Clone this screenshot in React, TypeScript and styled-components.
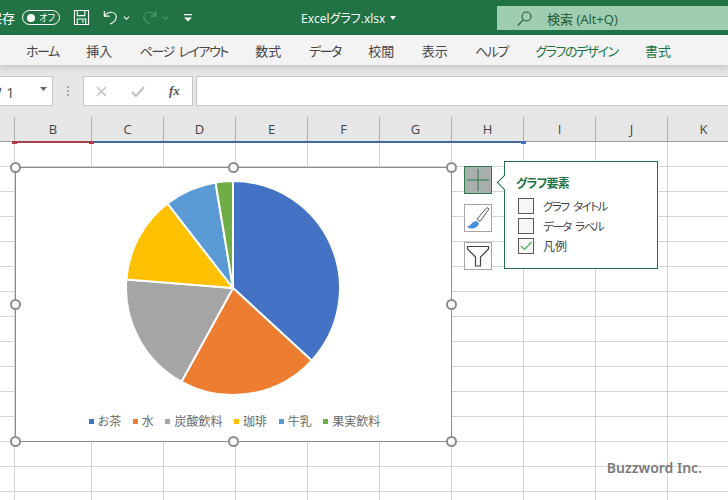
import styled, { createGlobalStyle } from "styled-components"

const GlobalStyle = createGlobalStyle`
    html, body {
        margin: 0;
        padding: 0;
        background: #fff;
    }
    body {
        font-family: "Open Sans", "Noto Sans CJK JP", sans-serif;
    }
    * {
        box-sizing: border-box;
    }
`

const Page = styled.div`
    width: 728px;
    height: 500px;
    overflow: hidden;
    display: flex;
    flex-direction: column;
    position: relative;
    font-feature-settings: "palt";
`

const TitleBar = styled.div`
    height: 35px;
    flex: none;
    background: #217346;
    color: #fff;
    display: flex;
    align-items: center;
`

const SaveLabel = styled.span`
    font-size: 13px;
    margin-left: -11px;
    width: 33px;
    white-space: nowrap;
`

const Toggle = styled.div`
    width: 38px;
    height: 15px;
    border: 1px solid #fff;
    border-radius: 8px;
    display: flex;
    align-items: center;
    justify-content: space-between;
    padding: 0 4px 0 4px;
    font-size: 9px;
    line-height: 1;
`

const ToggleKnob = styled.span`
    width: 8px;
    height: 8px;
    border-radius: 50%;
    background: #fff;
`

const QuickIcon = styled.svg<{ $left: number }>`
    flex: none;
    margin-left: ${({ $left }) => $left}px;
`

const FileName = styled.div`
    margin-left: 109px;
    width: 196px;
    font-size: 12px;
    display: flex;
    align-items: center;
    gap: 5px;
`

const Search = styled.div`
    width: 231px;
    height: 24px;
    margin-top: 1px;
    background: #9fcdb0;
    display: flex;
    align-items: center;
    padding-left: 20px;
    gap: 15px;
    color: #1d5a37;
    font-size: 13px;
`

const TabBar = styled.div`
    height: 30px;
    flex: none;
    background: #f3f3f3;
    display: flex;
    align-items: center;
    padding-left: 26px;
    gap: 27.5px;
    box-shadow: 0 3px 6px rgba(0, 0, 0, 0.14);
    position: relative;
`

const Tab = styled.span<{ $accent?: boolean; $kana?: boolean }>`
    font-size: 13px;
    white-space: nowrap;
    word-spacing: 3px;
    letter-spacing: ${({ $kana }) => ($kana ? "-1.5px" : "0")};
    color: ${({ $accent }) => ($accent ? "#217346" : "#444")};
`

const FormulaBar = styled.div`
    height: 52px;
    flex: none;
    background: #e6e6e6;
    display: flex;
    align-items: flex-start;
    padding-top: 11px;
`

const NameBox = styled.div`
    width: 113px;
    height: 30px;
    margin-left: -60px;
    flex: none;
    background: #fff;
    border: 1px solid #c6c6c6;
    display: flex;
    align-items: center;
    justify-content: space-between;
    padding: 0 5px 0 22px;
    font-size: 15px;
    color: #555;
    white-space: nowrap;
`

const NameCaret = styled.svg`
    margin-bottom: 5px;
`

const Grip = styled.div`
    width: 30px;
    height: 30px;
    flex: none;
    display: flex;
    flex-direction: column;
    align-items: center;
    justify-content: center;
    gap: 2px;

    span {
        width: 2px;
        height: 2px;
        background: #a6a6a6;
    }
`

const FormulaButtons = styled.div`
    width: 110px;
    height: 30px;
    flex: none;
    background: #fff;
    border: 1px solid #c6c6c6;
    display: flex;
    align-items: center;
    padding-left: 12px;
    gap: 24px;
`

const FxLabel = styled.span`
    font-family: "Liberation Serif", serif;
    font-style: italic;
    font-weight: 700;
    font-size: 13px;
    color: #555;
`

const FormulaInput = styled.div`
    flex: 1;
    height: 30px;
    margin-left: 3px;
    background: #fff;
    border: 1px solid #c6c6c6;
    border-right: none;
`

const ColumnHeaders = styled.div`
    height: 25px;
    flex: none;
    background: #e6e6e6;
    display: grid;
    grid-template-columns: 15px 77px repeat(10, 72px);
    border-bottom: 1px solid #9a9a9a;
    position: relative;
`

const ColumnHead = styled.div`
    border-right: 1px solid #b0b0b0;
    display: flex;
    align-items: center;
    justify-content: center;
    font-size: 13px;
    color: #444;
`

const RangeLine = styled.div<{ $from: number; $to: number; $color: string }>`
    position: absolute;
    z-index: 1;
    left: ${({ $from }) => $from}px;
    width: ${({ $to, $from }) => $to - $from}px;
    bottom: -2px;
    height: 2px;
    background: ${({ $color }) => $color};
`

const RangeMark = styled.div<{ $at: number; $color: string }>`
    position: absolute;
    z-index: 1;
    left: ${({ $at }) => $at}px;
    bottom: -3px;
    width: 5px;
    height: 3px;
    background: ${({ $color }) => $color};
`

const Sheet = styled.div`
    flex: 1;
    position: relative;
    overflow: hidden;
`

const CellGrid = styled.div`
    display: grid;
    grid-template-columns: 15px 77px repeat(10, 72px);
    grid-template-rows: repeat(15, 25px);
`

const Cell = styled.div`
    border-right: 1px solid #d4d4d4;
    border-bottom: 1px solid #d4d4d4;
`

const ChartFrame = styled.div`
    position: absolute;
    left: 15px;
    top: 25px;
    width: 437px;
    height: 275px;
    background: #fff;
    border: 1px solid #8c8c8c;
    display: flex;
    flex-direction: column;
    align-items: center;
    padding-top: 12px;
`

const PieBox = styled.svg`
    flex: none;
    margin-right: 1px;
`

const Legend = styled.div`
    display: flex;
    align-items: center;
    gap: 11.6px;
    margin: 16px 0 0 2px;
    font-size: 12px;
    color: #6a6a6a;
`

const LegendItem = styled.div`
    display: flex;
    align-items: center;
    gap: 4px;
`

const LegendDot = styled.span<{ $color: string }>`
    width: 5px;
    height: 5px;
    background: ${({ $color }) => $color};
`

const Handle = styled.span<{ $x: number; $y: number }>`
    position: absolute;
    left: calc(${({ $x }) => $x}% + ${({ $x }) => $x / 100}px);
    top: calc(${({ $y }) => $y}% + ${({ $y }) => $y / 100}px);
    width: 11px;
    height: 11px;
    margin: -6px 0 0 -6px;
    border-radius: 50%;
    background: #fff;
    border: 2px solid #8c8c8c;
`

const ChartTools = styled.div`
    position: absolute;
    left: 464px;
    top: 19px;
    display: flex;
    gap: 12px;
    align-items: flex-start;
`

const ToolColumn = styled.div`
    display: flex;
    flex-direction: column;
    gap: 10px;
    padding-top: 5px;
`

const ToolButton = styled.div<{ $active?: boolean }>`
    width: 28px;
    height: 28px;
    display: flex;
    align-items: center;
    justify-content: center;
    background: ${({ $active }) => ($active ? "#a9aeab" : "#fff")};
    border: 1px solid ${({ $active }) => ($active ? "#2b7a50" : "#a6a6a6")};
`

const Popup = styled.div`
    width: 154px;
    height: 108px;
    position: relative;
    background: #fff;
    border: 1px solid #217346;
    padding: 14px 0 0 11px;

    &::before {
        content: "";
        position: absolute;
        left: -6px;
        top: 15px;
        width: 10px;
        height: 10px;
        background: #fff;
        border-left: 1px solid #217346;
        border-bottom: 1px solid #217346;
        transform: rotate(45deg);
    }
`

const PopupTitle = styled.div`
    font-size: 12px;
    line-height: 16px;
    font-weight: 700;
    letter-spacing: -0.8px;
    color: #217346;
    margin-bottom: 6px;
`

const OptionRow = styled.div`
    display: flex;
    align-items: center;
    gap: 9px;
    height: 16px;
    margin: 0 0 4px 2px;
    color: #444;
    white-space: nowrap;
`

const OptionLabel = styled.span<{ $kana?: boolean }>`
    font-size: ${({ $kana }) => ($kana ? "11.5px" : "12px")};
    word-spacing: 3px;
    letter-spacing: ${({ $kana }) => ($kana ? "-1.5px" : "0")};
`

const CheckBox = styled.span`
    width: 16px;
    height: 16px;
    flex: none;
    display: flex;
    align-items: center;
    justify-content: center;
    background: #f6f6f6;
    border: 1px solid #5a5a5a;
`

const Watermark = styled.div`
    position: absolute;
    right: 26px;
    bottom: 23px;
    font-size: 14px;
    font-weight: 600;
    color: #7a7a7a;
    font-family: "Noto Sans", sans-serif;
`

type Slice = { name: string; color: string; end: number }

const slices: Slice[] = [
    { name: "お茶", color: "#4472c4", end: 132.7 },
    { name: "水", color: "#ed7d31", end: 208.8 },
    { name: "炭酸飲料", color: "#a5a5a5", end: 274.6 },
    { name: "珈琲", color: "#ffc000", end: 322.2 },
    { name: "牛乳", color: "#5b9bd5", end: 350.6 },
    { name: "果実飲料", color: "#70ad47", end: 360 },
]

const tabs = [
    { label: "ホーム", kana: true },
    { label: "挿入" },
    { label: "ページ レイアウト", kana: true },
    { label: "数式" },
    { label: "データ", kana: true },
    { label: "校閲" },
    { label: "表示" },
    { label: "ヘルプ", kana: true },
    { label: "グラフのデザイン", kana: true, accent: true },
    { label: "書式", accent: true },
]

const columns = ["", "B", "C", "D", "E", "F", "G", "H", "I", "J", "K", ""]

const point = (deg: number, r: number, c: number) => {
    const rad = (deg * Math.PI) / 180
    return `${(c + r * Math.sin(rad)).toFixed(2)} ${(c - r * Math.cos(rad)).toFixed(2)}`
}

const PieChart = () => {
    const c = 108
    const r = 107
    return (
        <PieBox width={216} height={216} viewBox="0 0 216 216">
            {slices.map((s, i) => {
                const start = i === 0 ? 0 : slices[i - 1].end
                const large = s.end - start > 180 ? 1 : 0
                return (
                    <path
                        key={s.name}
                        d={`M${c} ${c}L${point(start, r, c)}A${r} ${r} 0 ${large} 1 ${point(s.end, r, c)}Z`}
                        fill={s.color}
                        stroke="#fff"
                        strokeWidth={2}
                    />
                )
            })}
        </PieBox>
    )
}

const handles = [
    [0, 0], [50, 0], [100, 0],
    [0, 50], [100, 50],
    [0, 100], [50, 100], [100, 100],
]

export default function App() {
    return (
        <Page>
            <GlobalStyle />
            <TitleBar>
                <SaveLabel>保存</SaveLabel>
                <Toggle>
                    <ToggleKnob />
                    <span>オフ</span>
                </Toggle>
                <QuickIcon $left={13} width="17" height="17" viewBox="0 0 18 18" fill="none" stroke="#fff" strokeWidth="1.1">
                    <path d="M1.5 1.5h15v15h-15z" />
                    <path d="M4.5 1.5v5.5h8v-5.5M4.5 16.5v-6h9v6M10.5 11.5v3" />
                </QuickIcon>
                <QuickIcon $left={13} width="15" height="17" viewBox="0 0 17 18" fill="none" stroke="#fff" strokeWidth="1.3">
                    <path d="M1.5 1.5v6h6" />
                    <path d="M1.5 7.5c2-2.8 4.500-4.500 7.500-4.500 3.500 0 6 2.500 6 5.500 0 4-3.500 6.500-7 8" />
                </QuickIcon>
                <QuickIcon $left={5} width="7" height="6" viewBox="0 0 8 6" fill="none" stroke="#fff" strokeWidth="1.2">
                    <path d="M1 1.500l3 3 3-3" />
                </QuickIcon>
                <QuickIcon $left={12} width="15" height="17" viewBox="0 0 17 18" fill="none" stroke="#4f9a72" strokeWidth="1.3">
                    <path d="M15.500 1.500v6h-6" />
                    <path d="M15.500 7.500c-2-2.800-4.500-4.500-7.500-4.500-3.500 0-6 2.500-6 5.500 0 4 3.500 6.500 7 8" />
                </QuickIcon>
                <QuickIcon $left={5} width="7" height="6" viewBox="0 0 8 6" fill="none" stroke="#4f9a72" strokeWidth="1.2">
                    <path d="M1 1.500l3 3 3-3" />
                </QuickIcon>
                <QuickIcon $left={15} width="8" height="8" viewBox="0 0 8 8" fill="#fff">
                    <path d="M0 0h8v1.200h-8zM0 3.500h8l-4 4z" />
                </QuickIcon>
                <FileName>
                    Excelグラフ.xlsx
                    <svg width="6" height="4" viewBox="0 0 6 4" fill="#fff">
                        <path d="M0 0h6l-3 4z" />
                    </svg>
                </FileName>
                <Search>
                    <svg width="15" height="15" viewBox="0 0 15 15" fill="none" stroke="#1d5a37" strokeWidth="1.1">
                        <circle cx="9.500" cy="5.500" r="4.500" />
                        <path d="M6.200 8.800l-5.500 5.700" />
                    </svg>
                    <span>検索 (Alt+Q)</span>
                </Search>
            </TitleBar>
            <TabBar>
                {tabs.map(t => <Tab key={t.label} $kana={t.kana} $accent={t.accent}>{t.label}</Tab>)}
            </TabBar>
            <FormulaBar>
                <NameBox>
                    <span>グラフ 1</span>
                    <NameCaret width="7" height="4" viewBox="0 0 9 5" fill="#666">
                        <path d="M0 0h9l-4.500 5z" />
                    </NameCaret>
                </NameBox>
                <Grip><span /><span /><span /></Grip>
                <FormulaButtons>
                    <svg width="11" height="11" viewBox="0 0 11 11" stroke="#c0c0c0" strokeWidth="1.500">
                        <path d="M1 1l9 9M10 1l-9 9" />
                    </svg>
                    <svg width="14" height="11" viewBox="0 0 14 11" fill="none" stroke="#c0c0c0" strokeWidth="2">
                        <path d="M1 6l4 4 8-9" />
                    </svg>
                    <FxLabel>fx</FxLabel>
                </FormulaButtons>
                <FormulaInput />
            </FormulaBar>
            <ColumnHeaders>
                {columns.map((c, i) => <ColumnHead key={i}>{c}</ColumnHead>)}
                <RangeLine $from={15} $to={92} $color="#a5424a" />
                <RangeLine $from={92} $to={524} $color="#46699b" />
                <RangeMark $at={12} $color="#b23a48" />
                <RangeMark $at={89} $color="#b23a48" />
                <RangeMark $at={521} $color="#4472c4" />
            </ColumnHeaders>
            <Sheet>
                <CellGrid>
                    {Array.from({ length: 15 * 12 }, (_, i) => <Cell key={i} />)}
                </CellGrid>
                <ChartFrame>
                    <PieChart />
                    <Legend>
                        {slices.map(s => (
                            <LegendItem key={s.name}>
                                <LegendDot $color={s.color} />
                                {s.name}
                            </LegendItem>
                        ))}
                    </Legend>
                    {handles.map(([x, y]) => <Handle key={`${x}-${y}`} $x={x} $y={y} />)}
                </ChartFrame>
                <ChartTools>
                    <ToolColumn>
                        <ToolButton $active>
                            <svg width="22" height="22" viewBox="0 0 22 22" stroke="#2b7a50" strokeWidth="1">
                                <path d="M11 0v22M0 11h22" />
                            </svg>
                        </ToolButton>
                        <ToolButton>
                            <svg width="24" height="24" viewBox="0 0 24 24">
                                <path d="M21 1.500l2 1.500-9 12.500-3-2.500z" fill="#fff" stroke="#555" strokeWidth="1" />
                                <path d="M1 20.500c2.500-.3 3.500-2 5-3.500 1.500-1.500 3.500-2 5.500-1.500l1.500 2c-.5 2-2 4-5 4.800-2.500.600-5 .200-7-1.800z" fill="#4a90d9" />
                            </svg>
                        </ToolButton>
                        <ToolButton>
                            <svg width="24" height="24" viewBox="0 0 24 24" fill="#fff" stroke="#444" strokeWidth="1.200">
                                <path d="M1.500 2.500h21v2.500l-8 8v9h-5v-9l-8-8z" />
                            </svg>
                        </ToolButton>
                    </ToolColumn>
                    <Popup>
                        <PopupTitle>グラフ要素</PopupTitle>
                        <OptionRow><CheckBox /><OptionLabel $kana>グラフ タイトル</OptionLabel></OptionRow>
                        <OptionRow><CheckBox /><OptionLabel $kana>データ ラベル</OptionLabel></OptionRow>
                        <OptionRow>
                            <CheckBox>
                                <svg width="12" height="10" viewBox="0 0 12 10" fill="none" stroke="#3fae6a" strokeWidth="1.2">
                                    <path d="M1 5l3.500 3.500 7-7.500" />
                                </svg>
                            </CheckBox>
                            <OptionLabel>凡例</OptionLabel>
                        </OptionRow>
                    </Popup>
                </ChartTools>
                <Watermark>Buzzword Inc.</Watermark>
            </Sheet>
        </Page>
    )
}
